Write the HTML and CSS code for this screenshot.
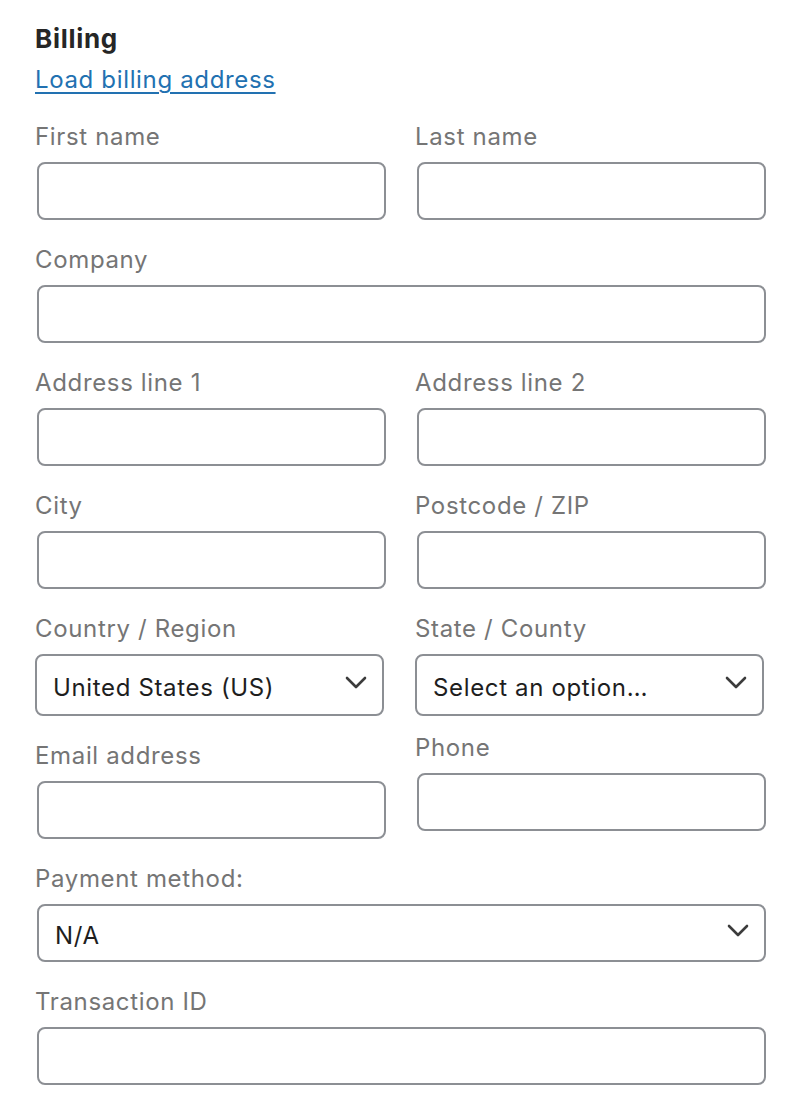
FILE: index.html
```html
<!DOCTYPE html>
<html lang="en">
<head>
<meta charset="utf-8">
<title>Billing</title>
<link rel="stylesheet" href="styles.css">
</head>
<body>
<div class="billing">
  <h3 class="title">Billing</h3>
  <a class="load-link" href="#">Load billing address</a>

  <div class="row two">
    <div class="field">
      <label class="label">First name</label>
      <input class="input" type="text">
    </div>
    <div class="field">
      <label class="label">Last name</label>
      <input class="input" type="text">
    </div>
  </div>

  <div class="row">
    <div class="field">
      <label class="label">Company</label>
      <input class="input" type="text">
    </div>
  </div>

  <div class="row two">
    <div class="field">
      <label class="label">Address line 1</label>
      <input class="input" type="text">
    </div>
    <div class="field">
      <label class="label">Address line 2</label>
      <input class="input" type="text">
    </div>
  </div>

  <div class="row two">
    <div class="field">
      <label class="label">City</label>
      <input class="input" type="text">
    </div>
    <div class="field">
      <label class="label">Postcode / ZIP</label>
      <input class="input" type="text">
    </div>
  </div>

  <div class="row two">
    <div class="field">
      <label class="label">Country / Region</label>
      <div class="select tall">
        <span class="select-text">United States (US)</span>
        <svg class="chevron" width="22" height="13" viewBox="0 0 22 13"><path d="M2 2 L11 11 L20 2" fill="none" stroke="#3c3c3c" stroke-width="2.6" stroke-linecap="round" stroke-linejoin="round"/></svg>
      </div>
    </div>
    <div class="field">
      <label class="label">State / County</label>
      <div class="select tall">
        <span class="select-text">Select an option…</span>
        <svg class="chevron" width="22" height="13" viewBox="0 0 22 13"><path d="M2 2 L11 11 L20 2" fill="none" stroke="#3c3c3c" stroke-width="2.6" stroke-linecap="round" stroke-linejoin="round"/></svg>
      </div>
    </div>
  </div>

  <div class="row two">
    <div class="field">
      <label class="label">Email address</label>
      <input class="input" type="text">
    </div>
    <div class="field raised">
      <label class="label">Phone</label>
      <input class="input" type="text">
    </div>
  </div>

  <div class="row">
    <div class="field">
      <label class="label">Payment method:</label>
      <div class="select wide">
        <span class="select-text">N/A</span>
        <svg class="chevron" width="22" height="13" viewBox="0 0 22 13"><path d="M2 2 L11 11 L20 2" fill="none" stroke="#3c3c3c" stroke-width="2.6" stroke-linecap="round" stroke-linejoin="round"/></svg>
      </div>
    </div>
  </div>

  <div class="row">
    <div class="field">
      <label class="label">Transaction ID</label>
      <input class="input" type="text">
    </div>
  </div>
</div>
</body>
</html>
```

FILE: styles.css
```css
html, body {
  margin: 0;
  padding: 0;
  background: #ffffff;
}

body {
  font-family: Inter, "Liberation Sans", sans-serif;
  color: #1e1e1e;
  letter-spacing: 0.65px;
}

.billing {
  width: 731px;
  padding: 24px 0 0 35px;
  display: flex;
  flex-direction: column;
}

.title {
  margin: 0;
  font-size: 26px;
  line-height: 30px;
  font-weight: 700;
  color: #262626;
  letter-spacing: 0.7px;
}

.load-link {
  margin-top: 11px;
  margin-bottom: 27px;
  align-self: flex-start;
  font-size: 24px;
  line-height: 30px;
  color: #2271b1;
  text-decoration: underline;
  text-underline-offset: 4px;
  text-decoration-thickness: 2px;
}

.row {
  display: flex;
  gap: 29px;
  margin-bottom: 25px;
  align-items: flex-start;
}

.row.two .field {
  width: 351px;
}

.row .field {
  flex: 0 0 auto;
  width: 731px;
  display: flex;
  flex-direction: column;
}

.field.raised {
  margin-top: -8px;
}

.label {
  font-size: 24px;
  line-height: 30px;
  color: #757575;
  margin-bottom: 10px;
}

.input {
  box-sizing: border-box;
  height: 58px;
  margin: 0 0 0 2px;
  width: calc(100% - 2px);
  border: 2px solid #8c8f94;
  border-radius: 8px;
  background: #fff;
  padding: 0 16px;
  font: inherit;
}

.select {
  box-sizing: border-box;
  display: flex;
  align-items: center;
  justify-content: space-between;
  border: 2px solid #8c8f94;
  border-radius: 8px;
  background: #fff;
  padding: 0 15px 0 16px;
}

.select.tall {
  height: 62px;
  width: calc(100% - 2px);
}

.select.wide {
  height: 58px;
  margin-left: 2px;
  width: calc(100% - 2px);
}

.select-text {
  font-size: 24px;
  line-height: 30px;
  color: #1e1e1e;
  padding-top: 5px;
}

.chevron {
  display: block;
  margin-top: -6px;
}
```
